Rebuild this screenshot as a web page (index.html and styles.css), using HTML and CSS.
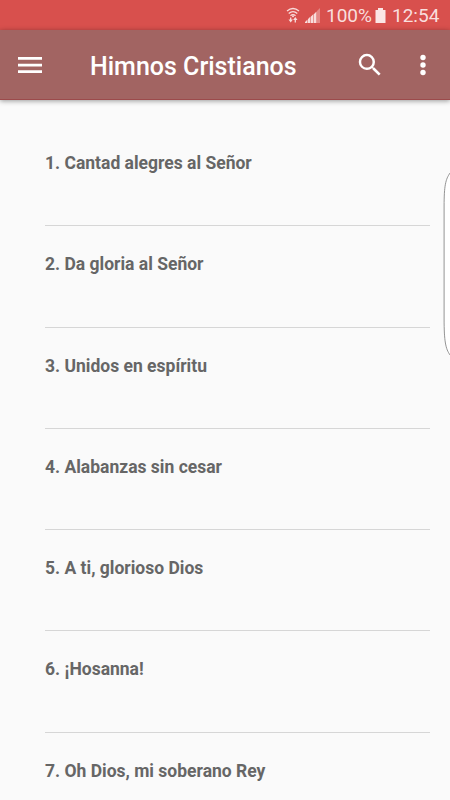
FILE: index.html
```html
<!DOCTYPE html>
<html lang="es">
<head>
<meta charset="utf-8">
<title>Himnos Cristianos</title>
<link rel="stylesheet" href="styles.css">
</head>
<body>
<div class="status">
  <svg class="wifi" width="14" height="18" viewBox="0 0 14 18" fill="none" stroke="#f8dcdb" stroke-width="1.3">
    <path d="M1 4Q7-1 13 4M2.700 6.500Q7 2.700 11.300 6.500M4.500 8.800Q7 6.500 9.500 8.800"/>
    <path d="M4.700 10.500V14M9.300 12V15.500"/>
    <path d="M2.500 12.500L4.700 15.500L6.900 12.500ZM7.100 13L9.300 10L11.500 13Z" fill="#f8dcdb" stroke="none"/>
    <circle cx="7" cy="9.300" r="1" fill="#f8dcdb" stroke="none"/>
  </svg>
  <svg class="signal" width="16" height="16" viewBox="0 0 16 16" fill="#f8dcdb">
    <path d="M0 15V14L2.500 11.500V15ZM3 15V11L5.500 8.500V15ZM6 15V8.500L8.500 6V15ZM9 15V6L11.500 3.500V15Z"/>
    <path d="M12 15V3L15 0V15Z" opacity=".4"/>
  </svg>
  <span class="percent">100%</span>
  <svg class="battery" width="11" height="16" viewBox="0 0 11 16" fill="#fbe6e5"><path d="M3 0H8V2H10.500V15H.5V2H3Z"/></svg>
  <span class="clock">12:54</span>
</div>
<header class="toolbar">
  <svg class="menu" width="24" height="16" viewBox="0 0 24 16" fill="#fff"><path d="M0 0H24V2.700H0ZM0 6.700H24V9.400H0ZM0 13.300H24V16H0Z"/></svg>
  <h1 class="title">Himnos Cristianos</h1>
  <svg class="search" width="30" height="30" viewBox="0 0 24 24" fill="#fff"><path d="M15.500 14h-.79l-.28-.27A6.471 6.471 0 0 0 16 9.500 6.500 6.500 0 1 0 9.500 16c1.610 0 3.090-.59 4.230-1.570l.27.28v.79l5 4.990L20.490 19l-4.990-5zm-6 0C7.010 14 5 11.990 5 9.500S7.010 5 9.500 5 14 7.010 14 9.500 11.990 14 9.500 14z"/></svg>
  <svg class="more" width="6" height="22" viewBox="0 0 6 22" fill="#fff"><circle cx="3" cy="3.500" r="2.700"/><circle cx="3" cy="11" r="2.700"/><circle cx="3" cy="18.500" r="2.700"/></svg>
</header>
<ul class="list">
  <li class="row">1. Cantad alegres al Señor</li>
  <li class="row">2. Da gloria al Señor</li>
  <li class="row">3. Unidos en espíritu</li>
  <li class="row">4. Alabanzas sin cesar</li>
  <li class="row">5. A ti, glorioso Dios</li>
  <li class="row">6. ¡Hosanna!</li>
  <li class="row">7. Oh Dios, mi soberano Rey</li>
</ul>
<svg class="edge" width="8" height="186" viewBox="0 0 8 186"><path d="M8.500 2C4 8 2.500 15 2.500 35V148C2.500 170 4 178 8.500 184" transform="translate(-.4 0)" fill="#fff" stroke="#888" stroke-width=".9"/></svg>
</body>
</html>
```
FILE: styles.css
```css
* {
  box-sizing: border-box;
}

body {
  position: relative;
  margin: 0;
  height: 800px;
  overflow: hidden;
  background: #fafafa;
  font-family: Roboto, sans-serif;
}

svg {
  display: block;
  flex: none;
}

.status {
  display: flex;
  align-items: center;
  height: 30px;
  padding-left: 286px;
  background: #d8504d;
  color: #f9dedd;
  font-size: 19px;
  line-height: 30px;
  white-space: nowrap;
}

.wifi {
  margin-top: 2px;
}

.signal {
  margin: 1px 0 0 5px;
}

.percent {
  width: 46px;
  margin: 2px 0 0 5px;
}

.battery {
  margin: 1px 0 0 3px;
}

.clock {
  margin: 2px 0 0 6px;
}

.toolbar {
  position: relative;
  display: flex;
  align-items: center;
  height: 70px;
  padding: 1px 24.5px 0 18px;
  background: #a26462;
  border-bottom: 1px solid #9c4a4b;
  box-shadow: 0 1px 5px rgba(0, 0, 0, 0.4);
}

.title {
  flex: 1;
  margin: 4px 0 0 48px;
  color: #fff;
  font-size: 25px;
  font-weight: 500;
  line-height: 32px;
}

.search {
  margin-right: 34.5px;
}

.list {
  margin: 0;
  padding: 25.1px 20px 0 45px;
  list-style: none;
}

.row {
  height: 101.25px;
  padding-top: 26.1px;
  border-bottom: 1px solid #d6d6d6;
  color: #666;
  font-size: 17.5px;
  font-weight: 700;
  line-height: 24px;
}

.edge {
  position: absolute;
  top: 171px;
  right: 0;
}
```
